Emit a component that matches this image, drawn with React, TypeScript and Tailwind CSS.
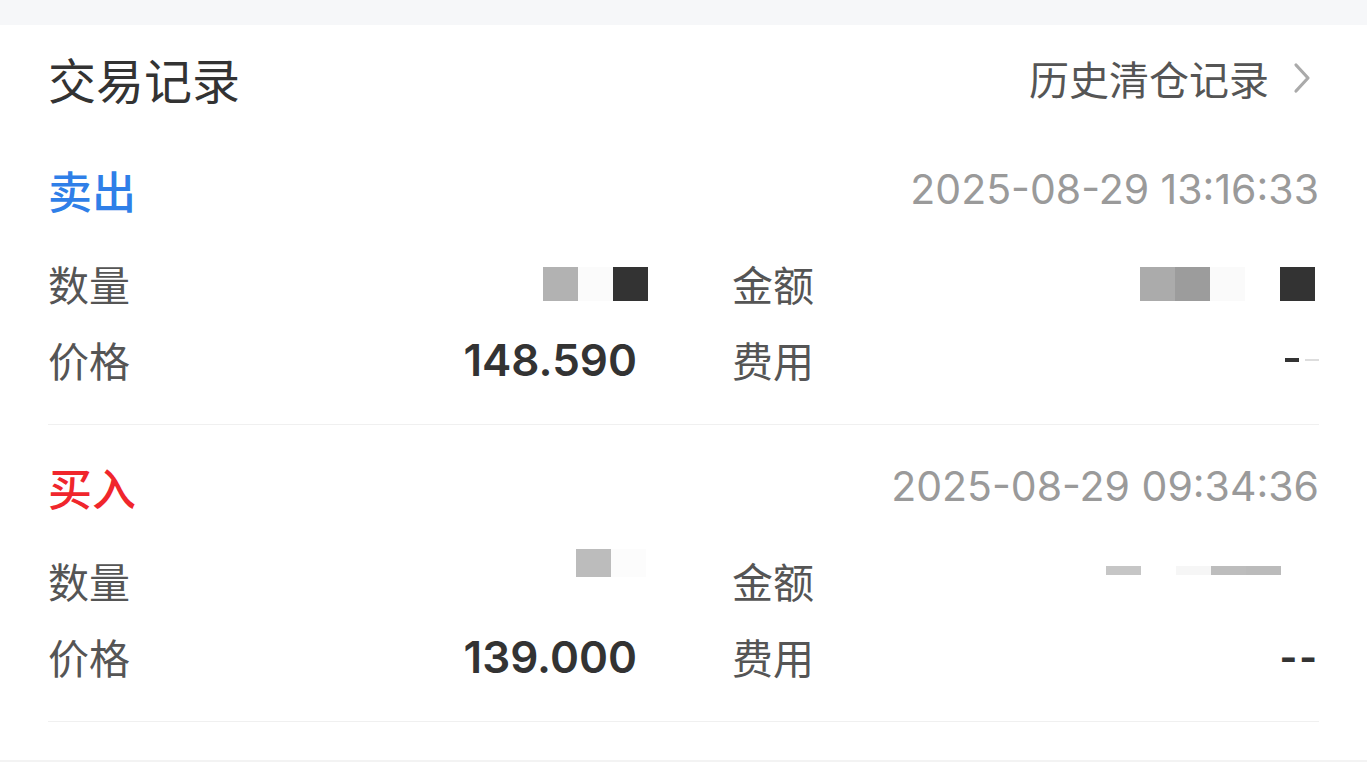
import React from 'react';

const cjk = { fontFamily: '"Noto Sans CJK SC", "Noto Sans", sans-serif' };
const num = { fontFamily: 'Inter, "Noto Sans CJK SC", sans-serif' };

type Trade = {
  side: string;
  color: string;
  time: string;
  qty: React.ReactNode;
  amount: React.ReactNode;
  price: string;
  fee: React.ReactNode;
};

const Block = ({ c, h = 'h-[34px]' }: { c: string; h?: string }) => (
  <span className={`inline-block w-[35px] ${h} ${c}`} />
);

const trades: Trade[] = [
  {
    side: '卖出',
    color: 'text-[#2f7fe8]',
    time: '2025-08-29 13:16:33',
    qty: (
      <span className="flex -mr-[13px]">
        <Block c="bg-[#b2b2b2]" />
        <Block c="bg-[#fbfbfb]" />
        <Block c="bg-[#333333]" />
      </span>
    ),
    amount: (
      <span className="flex mr-[4px]">
        <Block c="bg-[#ababab]" />
        <Block c="bg-[#9c9c9c]" />
        <Block c="bg-[#fafafa]" />
        <Block c="bg-white" />
        <Block c="bg-[#333333]" />
      </span>
    ),
    price: '148.590',
    fee: (
      <span className="flex items-center gap-[6px]">
        <span className="inline-block w-[14px] h-[4px] bg-[#333]" />
        <span className="inline-block w-[14px] h-[2px] bg-[#ddd]" />
      </span>
    ),
  },
  {
    side: '买入',
    color: 'text-[#f0262c]',
    time: '2025-08-29 09:34:36',
    qty: (
      <span className="flex -mt-[36px] -mr-[11px]">
        <Block c="bg-[#bcbcbc]" h="h-[28px]" />
        <Block c="bg-[#fcfcfc]" h="h-[28px]" />
      </span>
    ),
    amount: (
      <span className="flex -mt-[22px] mr-[38px]">
        <Block c="bg-[#c6c6c6]" h="h-[9px]" />
        <Block c="bg-white" h="h-[9px]" />
        <Block c="bg-[#f6f6f6]" h="h-[9px]" />
        <Block c="bg-[#bdbdbd]" h="h-[9px]" />
        <Block c="bg-[#bbbbbb]" h="h-[9px]" />
      </span>
    ),
    price: '139.000',
    fee: (
      <span className="text-[38px] font-bold text-[#333] tracking-[2px]" style={num}>
        --
      </span>
    ),
  },
];

const Row = ({ label, value }: { label: string; value: React.ReactNode }) => (
  <div className="flex items-center justify-between h-[76px]">
    <span className="text-[41px] text-[#555]" style={cjk}>
      {label}
    </span>
    <span className="flex items-center">{value}</span>
  </div>
);

const TradeCard = ({ t, first }: { t: Trade; first: boolean }) => (
  <div className={`${first ? 'pt-[28px]' : 'pt-[39px]'} pb-[26px] border-b border-[#f0f0f0]`}>
    <div className="flex items-center justify-between h-[46px]">
      <span className={`text-[44px] font-medium ${t.color}`} style={cjk}>
        {t.side}
      </span>
      <span className="text-[41px] text-[#9a9a9a]" style={num}>
        {t.time}
      </span>
    </div>
    <div className="grid grid-cols-2 gap-x-[97px] mt-[33px]">
      <Row label="数量" value={t.qty} />
      <Row label="金额" value={t.amount} />
      <Row
        label="价格"
        value={
          <span className="text-[44px] font-semibold text-[#333] -mr-[2px]" style={num}>
            {t.price}
          </span>
        }
      />
      <Row label="费用" value={t.fee} />
    </div>
  </div>
);

export default function App() {
  return (
    <div className="w-full min-h-[762px] bg-white flex flex-col">
      <div className="h-[25px] bg-[#f6f7f9]" />
      <div className="px-[48px]">
        <div className="flex items-center justify-between h-[114px] pb-[9px]">
          <h1 className="text-[48px] text-[#333]" style={cjk}>
            交易记录
          </h1>
          <div className="flex items-center gap-[24px] mr-[8px]">
            <span className="text-[40px] text-[#555]" style={cjk}>
              历史清仓记录
            </span>
            <svg width="18" height="32" viewBox="0 0 18 32" fill="none">
              <path d="M3 3l12 13-12 13" stroke="#aaa" strokeWidth="3.2" strokeLinecap="round" strokeLinejoin="round" />
            </svg>
          </div>
        </div>
        {trades.map((t, i) => (
          <TradeCard key={t.time} t={t} first={i === 0} />
        ))}
      </div>
      <div className="mt-auto h-[2px] bg-[#f3f3f3]" />
    </div>
  );
}
